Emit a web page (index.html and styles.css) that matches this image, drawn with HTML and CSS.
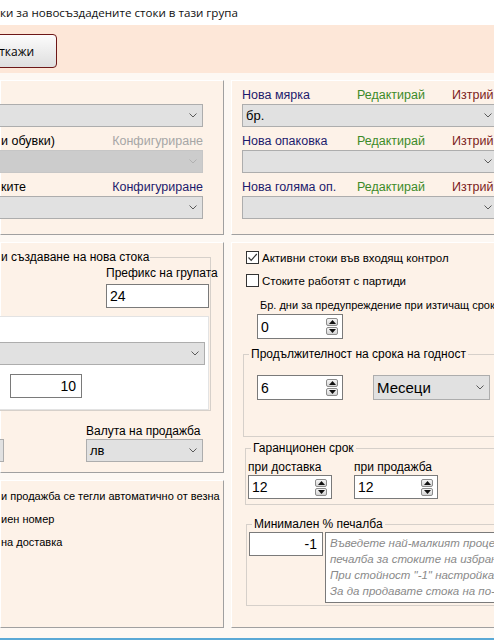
FILE: index.html
```html
<!DOCTYPE html>
<html lang="bg">
<head>
<meta charset="utf-8">
<title>Настройки</title>
<link rel="stylesheet" href="styles.css">
</head>
<body>
<div class="title">ки за новосъздадените стоки в тази група</div>
<div class="toolbar"><button class="btn">Откажи</button></div>

<main class="content">
  <!-- row 1 left -->
  <section class="panel p-a">
    <div class="lrow"></div>
    <div class="select sel-left"><span></span><svg class="chev" width="8" height="5" viewBox="0 0 8 5"><polyline points="0.5,0.5 4,4 7.5,0.5"/></svg></div>
    <div class="lrow"><span>и обувки)</span><span class="c-gray">Конфигуриране</span></div>
    <div class="select sel-left disabled"><span></span><svg class="chev" width="8" height="5" viewBox="0 0 8 5"><polyline points="0.5,0.5 4,4 7.5,0.5"/></svg></div>
    <div class="lrow"><span>ките</span><span class="c-navy">Конфигуриране</span></div>
    <div class="select sel-left"><span></span><svg class="chev" width="8" height="5" viewBox="0 0 8 5"><polyline points="0.5,0.5 4,4 7.5,0.5"/></svg></div>
  </section>

  <!-- row 1 right -->
  <section class="panel p-b">
    <div class="lrow3"><span class="c-navy">Нова мярка</span><span class="c-green">Редактирай</span><span class="c-red">Изтрий</span></div>
    <div class="select sel-right"><span>бр.</span><svg class="chev" width="8" height="5" viewBox="0 0 8 5"><polyline points="0.5,0.5 4,4 7.5,0.5"/></svg></div>
    <div class="lrow3"><span class="c-navy">Нова опаковка</span><span class="c-green">Редактирай</span><span class="c-red">Изтрий</span></div>
    <div class="select sel-right"><span></span><svg class="chev" width="8" height="5" viewBox="0 0 8 5"><polyline points="0.5,0.5 4,4 7.5,0.5"/></svg></div>
    <div class="lrow3"><span class="c-navy">Нова голяма оп.</span><span class="c-green">Редактирай</span><span class="c-red">Изтрий</span></div>
    <div class="select sel-right"><span></span><svg class="chev" width="8" height="5" viewBox="0 0 8 5"><polyline points="0.5,0.5 4,4 7.5,0.5"/></svg></div>
  </section>

  <!-- row 2 left -->
  <div class="left-stack">
    <section class="panel p-c">
      <fieldset class="fs fs-c">
        <legend>и създаване на нова стока</legend>
        <div class="prefix">
          <div class="lbl">Префикс на групата</div>
          <div class="txt">24</div>
        </div>
        <div class="innerbox">
          <div class="select sel-inner"><span></span><svg class="chev" width="8" height="5" viewBox="0 0 8 5"><polyline points="0.5,0.5 4,4 7.5,0.5"/></svg></div>
          <div class="txt num10">10</div>
        </div>
      </fieldset>
      <div class="currency">
        <div class="select cur-left"><span></span></div>
        <div class="cur-right">
          <div class="lbl">Валута на продажба</div>
          <div class="select"><span>лв</span><svg class="chev" width="8" height="5" viewBox="0 0 8 5"><polyline points="0.5,0.5 4,4 7.5,0.5"/></svg></div>
        </div>
      </div>
    </section>
    <section class="panel p-d">
      <div class="trow">и продажба се тегли автоматично от везна</div>
      <div class="trow">иен номер</div>
      <div class="trow">на доставка</div>
    </section>
  </div>

  <!-- row 2 right -->
  <section class="panel p-e">
    <div class="cb-row"><span class="cb"><svg width="11" height="11" viewBox="0 0 11 11"><polyline points="1.5,5.5 4.2,8.3 9.8,2"/></svg></span><span>Активни стоки във входящ контрол</span></div>
    <div class="cb-row cb-row2"><span class="cb"></span><span>Стоките работят с партиди</span></div>
    <div class="lbl days">Бр. дни за предупреждение при изтичащ срок</div>
    <div class="spin spin0"><span>0</span><span class="spinbtns"><span class="sb"><svg width="7" height="4" viewBox="0 0 7 4"><polygon points="0,4 7,4 3.5,0"/></svg></span><span class="sb"><svg width="7" height="4" viewBox="0 0 7 4"><polygon points="0,0 7,0 3.5,4"/></svg></span></span></div>

    <fieldset class="fs fs-p">
      <legend>Продължителност на срока на годност</legend>
      <div class="prow">
        <div class="spin spin6"><span>6</span><span class="spinbtns"><span class="sb"><svg width="7" height="4" viewBox="0 0 7 4"><polygon points="0,4 7,4 3.5,0"/></svg></span><span class="sb"><svg width="7" height="4" viewBox="0 0 7 4"><polygon points="0,0 7,0 3.5,4"/></svg></span></span></div>
        <div class="select sel-months"><span>Месеци</span><svg class="chev" width="8" height="5" viewBox="0 0 8 5"><polyline points="0.5,0.5 4,4 7.5,0.5"/></svg></div>
      </div>
    </fieldset>

    <fieldset class="fs fs-g">
      <legend>Гаранционен срок</legend>
      <div class="grow">
        <div class="gcol">
          <div class="lbl">при доставка</div>
          <div class="spin spin12"><span>12</span><span class="spinbtns"><span class="sb"><svg width="7" height="4" viewBox="0 0 7 4"><polygon points="0,4 7,4 3.5,0"/></svg></span><span class="sb"><svg width="7" height="4" viewBox="0 0 7 4"><polygon points="0,0 7,0 3.5,4"/></svg></span></span></div>
        </div>
        <div class="gcol">
          <div class="lbl">при продажба</div>
          <div class="spin spin12"><span>12</span><span class="spinbtns"><span class="sb"><svg width="7" height="4" viewBox="0 0 7 4"><polygon points="0,4 7,4 3.5,0"/></svg></span><span class="sb"><svg width="7" height="4" viewBox="0 0 7 4"><polygon points="0,0 7,0 3.5,4"/></svg></span></span></div>
        </div>
      </div>
    </fieldset>

    <fieldset class="fs fs-m">
      <legend>Минимален % печалба</legend>
      <div class="mrow">
        <div class="txt minp">-1</div>
        <div class="hint">Въведете най-малкият процент на<br>печалба за стоките на избраната група.<br>При стойност "-1" настройката се взема<br>За да продавате стока на по-ниска цена</div>
      </div>
    </fieldset>
  </section>
</main>
<div class="bottom-line"></div>
</body>
</html>
```

FILE: styles.css
```css
* { box-sizing: border-box; }
html, body { margin: 0; padding: 0; }
body {
  width: 494px;
  height: 640px;
  overflow: hidden;
  background: #fdf8f3;
  font-family: "Liberation Sans", Arial, sans-serif;
  font-size: 12px;
  color: #000;
}

.title {
  height: 25px;
  background: #fff;
  font-family: "Open Sans", sans-serif;
  font-size: 11.6px;
  line-height: 25px;
  white-space: nowrap;
  color: #111;
}
.toolbar {
  height: 48px;
  background: #fde7d8;
  padding-top: 9px;
}
.btn {
  display: block;
  margin-left: -33px;
  width: 90px;
  height: 34px;
  border: 1px solid #6d1717;
  border-radius: 4px;
  background: linear-gradient(#fcfcfc, #dedede);
  font-family: "Open Sans", sans-serif;
  font-size: 12px;
  color: #000;
  padding: 0;
}

.content {
  display: grid;
  grid-template-columns: 224px 290px;
  grid-template-rows: 155px 386px;
  gap: 7px;
  padding-top: 7px;
}
.panel {
  background: #fdf2e8;
  border: 1px solid;
  border-color: #ffffff #a0a0a0 #a0a0a0 #ffffff;
}

/* generic controls */
.select {
  height: 23px;
  background: #e1e1e1;
  border: 1px solid #adadad;
  display: flex;
  align-items: center;
  justify-content: space-between;
  padding: 0 5px 0 3px;
  font-size: 13px;
  white-space: nowrap;
}
.select.disabled { background: #cccccc; border-color: #c6c6c6; }
.chev polyline { fill: none; stroke: #5a5a5a; stroke-width: 1; }
.disabled .chev polyline { stroke: #b0b0b0; }

.txt {
  height: 24px;
  background: #fff;
  border: 1px solid #7a7a7a;
  font-size: 14px;
  line-height: 22px;
  padding: 0 3px;
}
.lbl { line-height: 14px; white-space: nowrap; }

.c-gray { color: #a6a6a6; }
.c-navy { color: #1c1a6c; }
.c-green { color: #3c8a28; }
.c-red { color: #7c1c1c; }

/* row 1 left */
.p-a { padding-right: 20px; }
.lrow {
  height: 23px;
  display: flex;
  justify-content: space-between;
  align-items: flex-end;
  line-height: 15px;
  padding-bottom: 1px;
  white-space: nowrap;
  font-size: 12.5px;
}
.sel-left { margin-left: -10px; }

/* row 1 right */
.p-b { padding-left: 10px; }
.lrow3 {
  height: 23px;
  display: grid;
  grid-template-columns: 115px 95px 60px;
  align-items: end;
  line-height: 15px;
  padding-bottom: 1px;
  white-space: nowrap;
  font-size: 12.5px;
}
.sel-right { width: 256px; }

/* row 2 left */
.left-stack { display: flex; flex-direction: column; gap: 7px; }
.p-c { height: 231px; }
.p-d { flex: 1; padding-top: 4px; }

.fs {
  border: 1px solid #d6d0ca;
  padding: 0;
  margin: 0;
  min-width: 0;
}
.fs legend {
  line-height: 14px;
  padding: 0 2px;
  margin-left: 5px;
  white-space: nowrap;
}
.fs-c { margin: 7px 12px 0 -10px; padding-right: 1px; }
.fs-c legend { margin-left: 8px; padding: 0 1px; }
.prefix { width: 103px; margin-left: auto; margin-top: 2px; }
.prefix .lbl { margin-bottom: 4px; }
.innerbox {
  margin-top: 8px;
  height: 94px;
  background: #fff;
  border: 1px solid #e3e3e3;
  padding: 25px 3px 0 0;
}
.sel-inner { margin-left: -5px; }
.num10 { width: 72px; margin-top: 9px; margin-left: 17px; text-align: right; padding-right: 5px; }

.currency {
  display: flex;
  justify-content: space-between;
  align-items: flex-end;
  margin: 13px 20px 0 0;
}
.cur-left { width: 63px; margin-left: -60px; }
.cur-right { width: 117px; }
.cur-right .lbl { margin-bottom: 1px; }

.trow { height: 23px; line-height: 23px; white-space: nowrap; font-size: 11px; }

/* row 2 right */
.p-e { padding: 8px 0 0 14px; }
.cb-row { display: flex; align-items: center; gap: 3px; height: 13px; white-space: nowrap; font-size: 11.5px; }
.cb-row2 { margin-top: 10px; }
.cb {
  width: 13px;
  height: 13px;
  flex: none;
  border: 1px solid #333;
  background: #fff;
  display: flex;
  align-items: center;
  justify-content: center;
}
.cb polyline { fill: none; stroke: #333; stroke-width: 1.2; }
.days { margin: 11px 0 0 14px; font-size: 11px; }

.spin {
  height: 25px;
  background: #fff;
  border: 1px solid #7a7a7a;
  display: flex;
  align-items: center;
  justify-content: space-between;
  padding: 0 4px 0 3px;
  font-size: 14px;
}
.spinbtns { display: flex; flex-direction: column; gap: 1px; }
.sb {
  width: 12px;
  height: 8px;
  border: 1px solid #8c8c8c;
  border-radius: 2px;
  background: linear-gradient(#f6f6f6, #d4d4d4);
  display: flex;
  align-items: center;
  justify-content: center;
}
.sb polygon { fill: #111; }
.spin0 { width: 86px; margin: 2px 0 0 11px; }

.fs-p { margin: 8px -60px 0 -3px; padding-bottom: 36px; }
.prow { display: flex; gap: 30px; margin: 14px 0 0 13px; }
.spin6 { width: 86px; }
.sel-months { width: 117px; height: 25px; font-size: 15px; padding-left: 3px; }

.fs-g { margin: 4px -60px 0 -1px; padding-bottom: 5px; }
.grow { display: flex; gap: 22px; margin: 5px 0 0 2px; }
.gcol .lbl { margin-bottom: 1px; }
.spin12 { width: 84px; height: 24px; }

.fs-m { margin: 12px -60px 0 0; padding-bottom: 2px; }
.mrow { display: flex; gap: 2px; margin: 1px 0 0 2px; }
.minp { width: 74px; text-align: right; padding-right: 5px; }
.hint {
  width: 220px;
  height: 71px;
  background: #fff;
  border: 1px solid #7a7a7a;
  padding: 2px 4px;
  font-style: italic;
  font-size: 11.5px;
  line-height: 16px;
  color: #8a8a8a;
  white-space: nowrap;
  overflow: hidden;
}

.bottom-line {
  margin-top: 10px;
  height: 2px;
  background: #5aa9d6;
}
```
